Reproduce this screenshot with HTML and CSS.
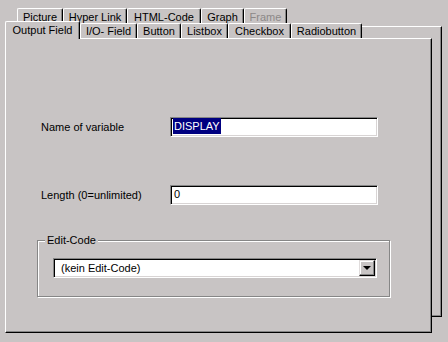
FILE: index.html
```html
<!DOCTYPE html>
<html lang="en">
<head>
	<meta charset="UTF-8">
	<title>Output Field</title>
	<link rel="stylesheet" href="styles.css">
</head>
<body>
	<div class="stage">
		<div class="back">
			<ul class="tabs tabs-back">
				<li class="tab t-picture">Picture</li>
				<li class="tab t-hyper">Hyper Link</li>
				<li class="tab t-html">HTML-Code</li>
				<li class="tab t-graph">Graph</li>
				<li class="tab t-frame disabled">Frame</li>
			</ul>
			<div class="panel back-panel"></div>
		</div>

		<div class="front">
			<ul class="tabs tabs-front">
				<li class="tab active t-output">Output Field</li>
				<li class="tab t-io">I/O- Field</li>
				<li class="tab t-button">Button</li>
				<li class="tab t-listbox">Listbox</li>
				<li class="tab t-checkbox">Checkbox</li>
				<li class="tab t-radio">Radiobutton</li>
			</ul>
			<div class="panel front-panel">
				<div class="row">
					<label>Name of variable</label>
					<div class="field"><span class="sel">DISPLAY</span></div>
				</div>
				<div class="row row-second">
					<label>Length (0=unlimited)</label>
					<div class="field">0</div>
				</div>
				<div class="group">
					<span class="legend">Edit-Code</span>
					<div class="field combo">
						<span class="combo-text">(kein Edit-Code)</span>
						<span class="drop"><span class="arrow"></span></span>
					</div>
				</div>
			</div>
		</div>
	</div>
</body>
</html>
```

FILE: styles.css
```css
body {
	margin: 0;
	background-color: #c8c4c4;
	font-family: "Liberation Sans", Arial, sans-serif;
	font-size: 11px;
	color: #000;
}

ul, li {
	margin: 0;
	padding: 0;
	list-style: none;
}

.stage {
	position: relative;
	width: 448px;
	height: 342px;
	padding: 21px 0 0 5px;
	box-sizing: border-box;
	overflow: hidden;
}

/* tab strips */
.tabs {
	display: flex;
	align-items: flex-end;
}

.tab {
	box-sizing: border-box;
	height: 18px;
	line-height: 16px;
	text-align: center;
	white-space: nowrap;
	border-top: 1px solid #fff;
	border-left: 1px solid #fff;
	border-right: 1px solid #000;
	border-radius: 2px 2px 0 0;
	box-shadow: inset -1px 0 #868686;
	background-color: #c8c4c4;
}

.tab.disabled {
	color: #8c8888;
}

.tabs-front .tab {
	height: 15px;
	line-height: 14px;
}

.tabs-front .active {
	height: 18px;
	line-height: 16px;
	margin-bottom: -1px;
	position: relative;
	z-index: 2;
}

.t-picture { width: 46px; }
.t-hyper { width: 64px; }
.t-html { width: 74px; }
.t-graph { width: 43px; }
.t-frame { width: 43px; }

.t-output { width: 75px; }
.t-io { width: 57px; }
.t-button { width: 44px; }
.t-listbox { width: 47px; }
.t-checkbox { width: 63px; }
.t-radio { width: 71px; }

/* panels */
.panel {
	box-sizing: border-box;
	border: 1px solid;
	border-color: #fff #000 #000 #fff;
	box-shadow: inset -1px -1px #868686;
	background-color: #c8c4c4;
}

.back {
	position: absolute;
	left: 17px;
	top: 8px;
	width: 425px;
}

.back-panel {
	height: 291px;
}

.front {
	position: relative;
	z-index: 1;
}

.front-panel {
	width: 427px;
	height: 295px;
	padding: 78px 0 0 31px;
}

/* form rows */
.row {
	display: flex;
	align-items: center;
	padding-left: 4px;
}

.row label {
	width: 129px;
}

.row-second {
	margin-top: 48px;
}

.field {
	box-sizing: border-box;
	width: 208px;
	height: 20px;
	padding-left: 3px;
	line-height: 16px;
	background-color: #fff;
	border: 1px solid;
	border-color: #868686 #fff #fff #868686;
	box-shadow: inset 1px 1px #000, inset -1px -1px #d8d4d4;
}

.sel {
	display: inline-block;
	margin-left: -1px;
	padding: 0 1px;
	background-color: #000080;
	color: #fff;
}

/* group box */
.group {
	position: relative;
	box-sizing: border-box;
	width: 353px;
	height: 57px;
	margin-top: 35px;
	padding: 17px 0 0 15px;
	border: 1px solid #868686;
	box-shadow: inset 1px 1px #fff, 1px 1px #fff;
}

.legend {
	position: absolute;
	left: 7px;
	top: -8px;
	padding: 0 2px;
	line-height: 14px;
	background-color: #c8c4c4;
}

.combo {
	display: flex;
	justify-content: space-between;
	width: 324px;
	padding: 1px 1px 1px 7px;
}

.combo-text {
	line-height: 16px;
}

.drop {
	box-sizing: border-box;
	width: 16px;
	height: 16px;
	display: flex;
	align-items: center;
	justify-content: center;
	background-color: #c8c4c4;
	border: 1px solid;
	border-color: #e0dcdc #000 #000 #e0dcdc;
	box-shadow: inset -1px -1px #868686, inset 1px 1px #fff;
}

.arrow {
	width: 0;
	height: 0;
	border-left: 4px solid transparent;
	border-right: 4px solid transparent;
	border-top: 4px solid #000;
}
```
